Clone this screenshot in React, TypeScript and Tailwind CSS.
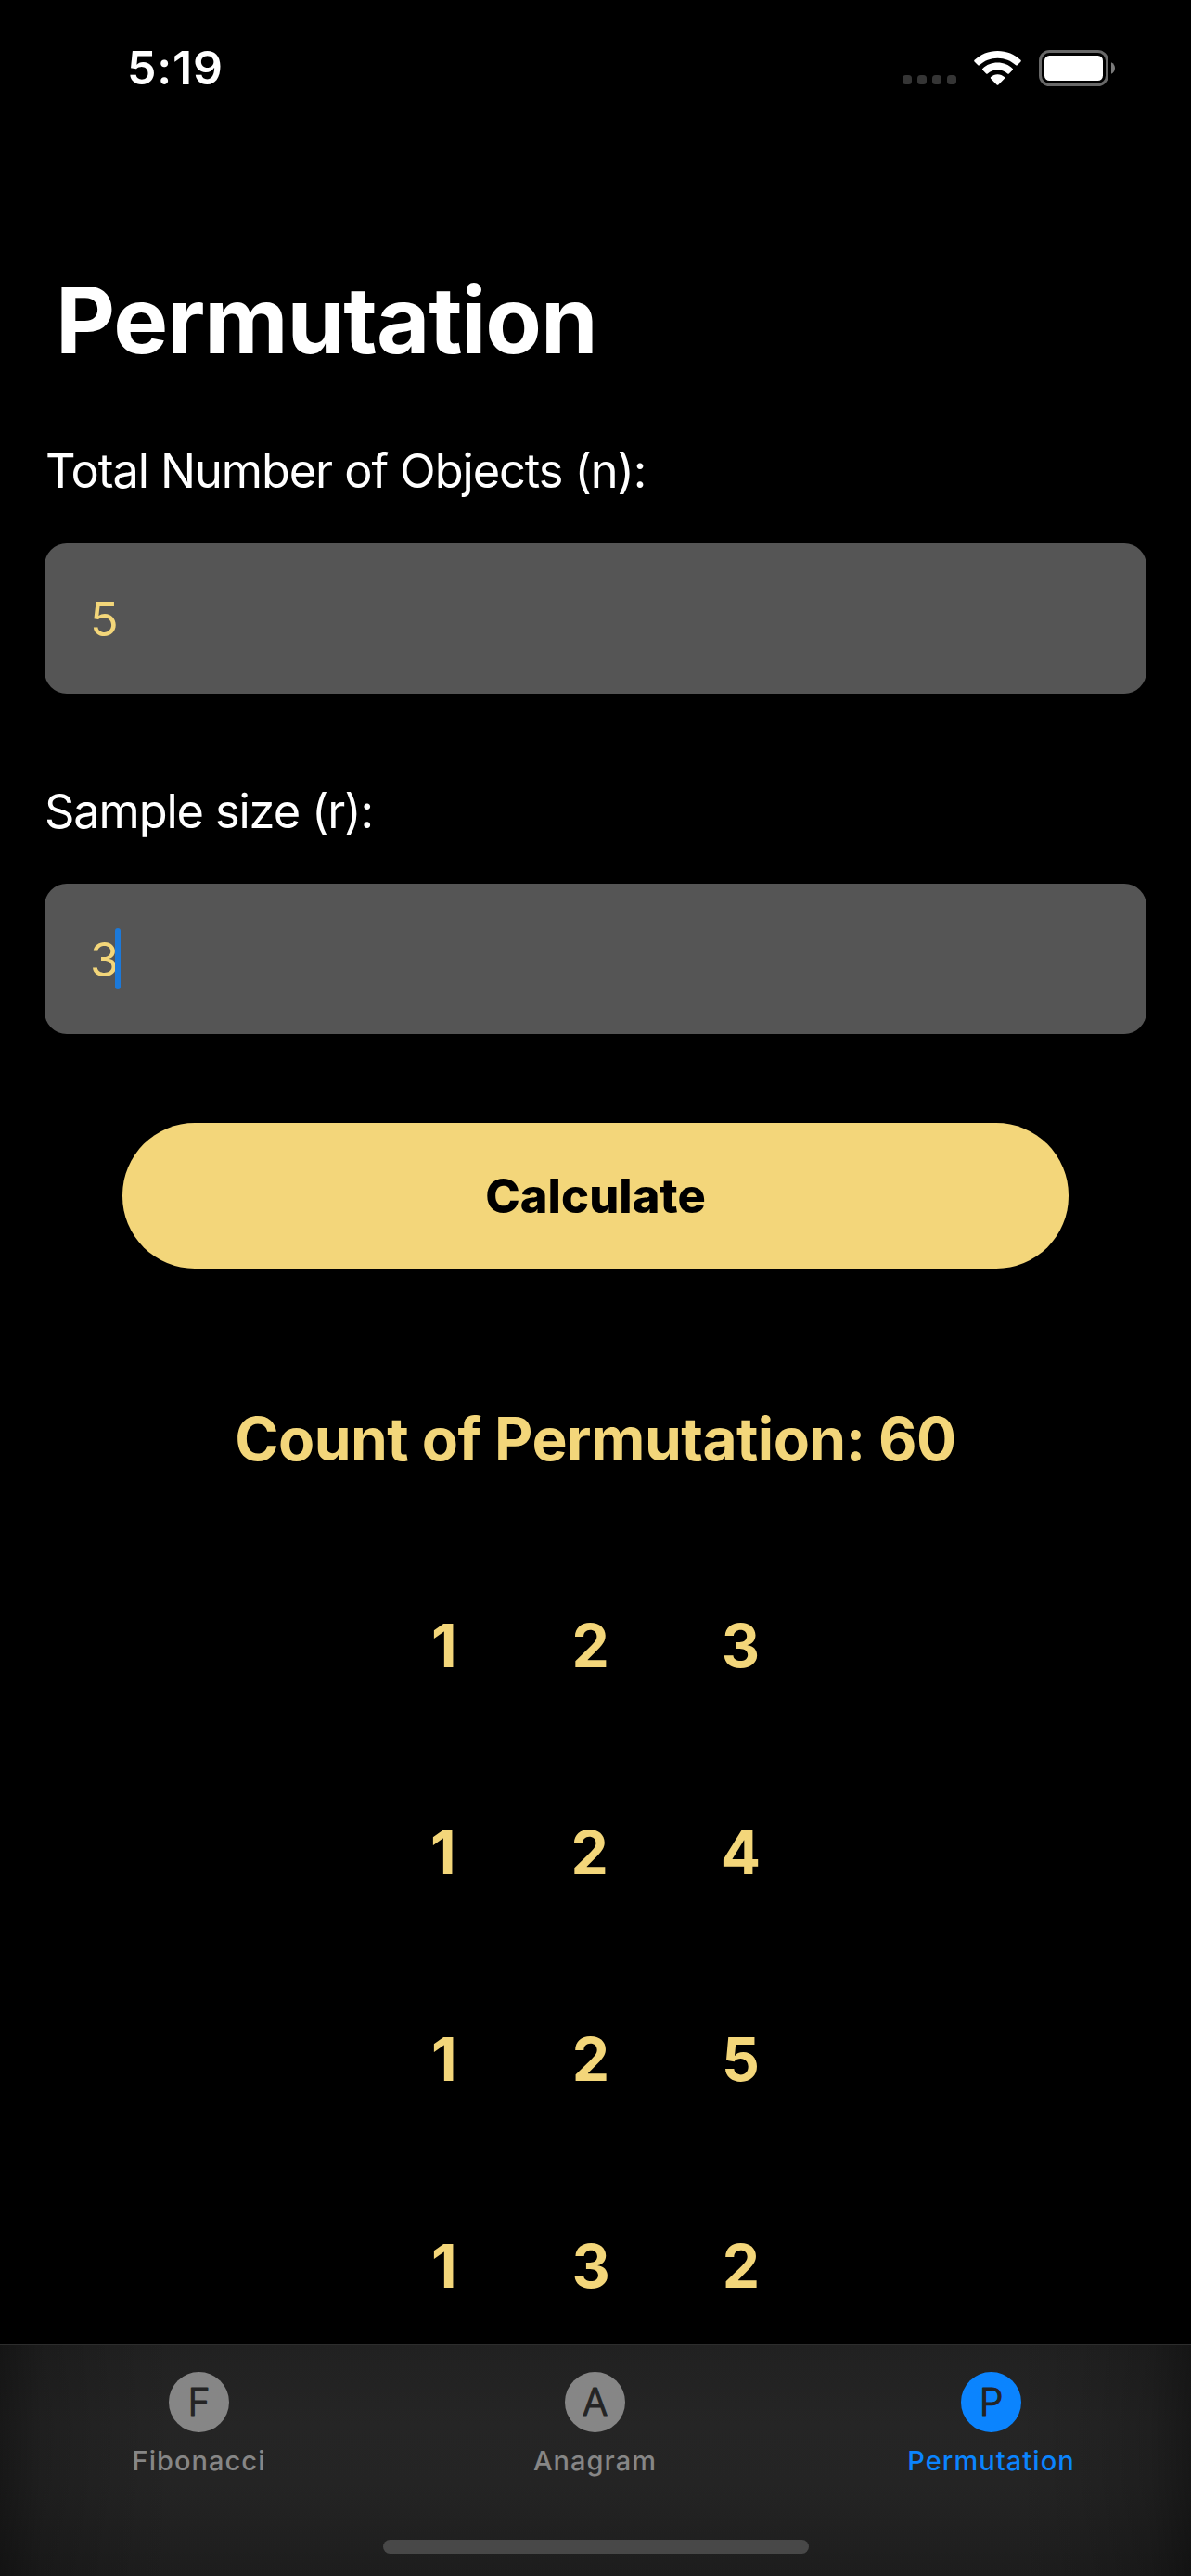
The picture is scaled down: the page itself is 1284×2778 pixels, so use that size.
import React from "react";

const permutations = [
  [1, 2, 3],
  [1, 2, 4],
  [1, 2, 5],
  [1, 3, 2],
];

const tabs = [
  { letter: "F", label: "Fibonacci", active: false },
  { letter: "A", label: "Anagram", active: false },
  { letter: "P", label: "Permutation", active: true },
];

function WifiIcon() {
  return (
    <svg className="h-[38px] w-[51px]" viewBox="0 0 51 38" fill="#fff">
      <path d="M25.5 0.9C35.2 0.9 44 4.6 50.4 10.8C50.9 11.2 50.9 11.9 50.5 12.4L46.7 16.3C46.3 16.7 45.6 16.7 45.1 16.3C40 11.5 33.1 8.7 25.5 8.7S11 11.5 5.9 16.3C5.4 16.7 4.7 16.7 4.3 16.3L0.5 12.4C0.1 11.9 0.1 11.2 0.6 10.8C7 4.6 15.8 0.9 25.5 0.9Z" />
      <path d="M25.5 13.6C31.8 13.6 37.5 16 41.7 20C42.2 20.4 42.2 21.1 41.7 21.6L37.8 25.5C37.4 25.9 36.8 25.9 36.3 25.5C33.5 22.9 29.7 21.3 25.5 21.3S17.5 22.9 14.7 25.5C14.2 25.9 13.6 25.9 13.2 25.5L9.3 21.6C8.8 21.1 8.8 20.4 9.3 20C13.5 16 19.2 13.6 25.5 13.6Z" />
      <path d="M25.5 26.3C28.3 26.3 30.9 27.4 32.8 29.1C33.3 29.6 33.3 30.3 32.9 30.7L26.3 37.4C25.9 37.9 25.1 37.9 24.7 37.4L18.1 30.7C17.7 30.3 17.7 29.6 18.2 29.1C20.1 27.4 22.7 26.3 25.5 26.3Z" />
    </svg>
  );
}

function BatteryIcon() {
  return (
    <svg className="h-[39px] w-[82px]" viewBox="0 0 82 39">
      <rect x="1.5" y="1.5" width="72" height="36" rx="10" fill="none" stroke="#686868" strokeWidth="3" />
      <rect x="6" y="6" width="63" height="27" rx="5.5" fill="#fff" />
      <path d="M78 13.3C80.4 14.3 82 16.7 82 19.5S80.4 24.7 78 25.7Z" fill="#7a7a7a" />
    </svg>
  );
}

function StatusBar() {
  return (
    <header className="flex h-[146px] shrink-0 items-center justify-between pr-[82px] pl-[137px]">
      <span className="text-[50px] leading-[60px] font-semibold tracking-[0.8px]">5:19</span>
      <div className="flex items-center">
        <div className="mt-[26px] mr-[19px] flex gap-[6px]">
          {[0, 1, 2, 3].map((i) => (
            <span key={i} className="size-[10px] rounded-[3.5px] bg-[#353535]" />
          ))}
        </div>
        <WifiIcon />
        <div className="ml-[19px]">
          <BatteryIcon />
        </div>
      </div>
    </header>
  );
}

function Field({ label, value, focused = false }: { label: string; value: string; focused?: boolean }) {
  return (
    <div className="flex flex-col gap-12">
      <label
        className={`text-[50.5px] leading-[60px] ${focused ? "tracking-[-1.12px]" : "pl-px tracking-[-1.08px]"}`}
      >
        {label}
      </label>
      <div className="flex h-[162px] items-center rounded-[24px] bg-[#555555] pl-[49px] text-[50.5px] leading-[60px] text-[#f3d67a]">
        <span className="mt-px">{value}</span>
        {focused && <span className="-ml-[4px] h-[66px] w-[6px] rounded-[3px] bg-[#1c79d9]" />}
      </div>
    </div>
  );
}

function TabIcon({ letter, active }: { letter: string; active: boolean }) {
  return (
    <svg className="size-[65px]" viewBox="0 0 65 65">
      <circle cx="32.5" cy="32.5" r="32.5" fill={active ? "#0b84fe" : "#868686"} />
      <text
        x="32.5"
        y="47"
        textAnchor="middle"
        className="font-['Inter'] text-[41px] font-light"
        fill="#242424"
        stroke="#242424"
        strokeWidth="1.2"
        strokeLinejoin="round"
      >
        {letter}
      </text>
    </svg>
  );
}

function TabBar() {
  return (
    <nav className="flex h-[250px] shrink-0 flex-col border-t border-[#2d2d2d] bg-[linear-gradient(90deg,rgba(0,0,0,0.36)_0px,rgba(0,0,0,0.17)_45px,rgba(0,0,0,0.08)_110px,transparent_190px,transparent_1094px,rgba(0,0,0,0.08)_1174px,rgba(0,0,0,0.17)_1239px,rgba(0,0,0,0.36)_1284px),linear-gradient(180deg,#212121,#252525_35%,#242424_60%,#1d1d1d)]">
      <div className="flex pt-[29px] pl-px">
        {tabs.map((tab) => (
          <div
            key={tab.label}
            className={`flex w-[427px] flex-col items-center ${tab.active ? "text-[#0b84fe]" : "text-[#868686]"}`}
          >
            <TabIcon letter={tab.letter} active={tab.active} />
            <span className="mt-[13px] text-[29px] leading-[36px] font-medium tracking-[1.05px]">{tab.label}</span>
          </div>
        ))}
      </div>
      <div className="mx-auto mt-[67px] h-[15px] w-[459px] rounded-full bg-[#484848]" />
    </nav>
  );
}

export default function App() {
  return (
    <div className="flex h-[2778px] w-[1284px] flex-col overflow-hidden bg-black font-['Inter',sans-serif] text-white">
      <StatusBar />
      <main className="flex min-h-0 flex-1 flex-col overflow-hidden px-12">
        <h1 className="mt-[139px] ml-[12px] text-[99px] leading-[120px] font-bold tracking-[-1.03px]">Permutation</h1>
        <div className="mt-[73px] flex flex-col gap-[97px]">
          <Field label="Total Number of Objects (n):" value="5" />
          <Field label="Sample size (r):" value="3" focused />
        </div>
        <button className="mx-[84px] mt-24 flex h-[157px] shrink-0 items-center justify-center rounded-[78px] bg-[#f3d67a] text-[50.5px] font-extrabold tracking-[0.1px] text-black">
          Calculate
        </button>
        <section className="mt-[72px] flex flex-col text-[64px] font-bold text-[#f3d67a]">
          <h2 className="flex h-[223px] items-center justify-center tracking-[-0.55px]">Count of Permutation: 60</h2>
          {permutations.map((row) => (
            <div key={row.join("")} className="flex h-[223px] shrink-0 items-center justify-center">
              <span>{row[0]}</span>
              <span className="mr-[121px] ml-[124px]">{row[1]}</span>
              <span>{row[2]}</span>
            </div>
          ))}
        </section>
      </main>
      <TabBar />
    </div>
  );
}
